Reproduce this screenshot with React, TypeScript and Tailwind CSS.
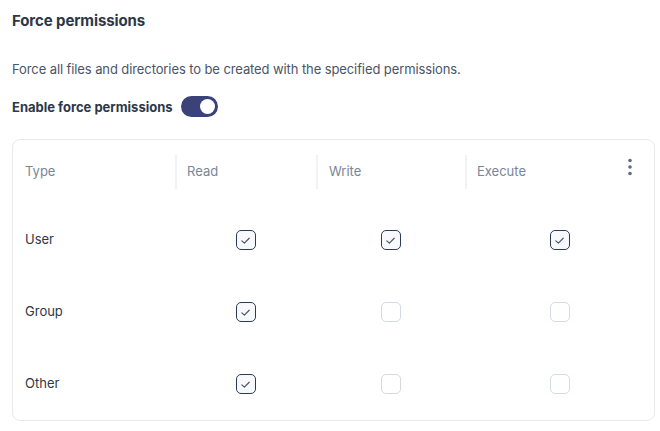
import React, { useState } from 'react';

type Perm = { type: string; read: boolean; write: boolean; execute: boolean };

const initialPerms: Perm[] = [
  { type: 'User', read: true, write: true, execute: true },
  { type: 'Group', read: true, write: false, execute: false },
  { type: 'Other', read: true, write: false, execute: false },
];

const Checkbox: React.FC<{ checked: boolean; onChange: () => void }> = ({ checked, onChange }) => (
  <button
    onClick={onChange}
    className={
      checked
        ? 'w-[20px] h-[20px] rounded-[5px] border-[1.5px] border-[#2f3a55] bg-[#f7f9fc] flex items-center justify-center'
        : 'w-[20px] h-[20px] rounded-[5px] border-[1.5px] border-[#d5dae3] bg-white'
    }
  >
    {checked && (
      <svg width="13" height="13" viewBox="0 0 12 12" fill="none">
        <path d="M2.6 6.3 L5 8.4 L9.4 3.9" stroke="#4a5468" strokeWidth="1.1" strokeLinecap="round" strokeLinejoin="round" />
      </svg>
    )}
  </button>
);

export default function App() {
  const [enabled, setEnabled] = useState(true);
  const [perms, setPerms] = useState<Perm[]>(initialPerms);

  const toggle = (i: number, key: 'read' | 'write' | 'execute') => {
    setPerms(prev => prev.map((p, idx) => (idx === i ? { ...p, [key]: !p[key] } : p)));
  };

  return (
    <div className="w-[660px] h-[431px] bg-white pl-3 pr-[5px] pt-[11px] font-['Inter',sans-serif] text-[#2d3748]">
      <h2 className="text-[15px] font-bold leading-[20px] tracking-[-0.1px]">Force permissions</h2>

      <p className="mt-[29px] text-[13px] leading-[18px] text-[#4a5568] tracking-[-0.1px]">
        Force all files and directories to be created with the specified permissions.
      </p>

      <div className="mt-[18px] flex items-center gap-2">
        <span className="text-[13px] font-bold leading-[18px]">Enable force permissions</span>
        <button
          onClick={() => setEnabled(!enabled)}
          className={`w-[37px] h-[21px] rounded-full p-[3px] flex items-center ${enabled ? 'bg-[#3b4279] justify-end' : 'bg-gray-300 justify-start'}`}
        >
          <span className="w-[15px] h-[15px] rounded-full bg-white block" />
        </button>
      </div>

      {/* Permissions table */}
      <div className="mt-[22px] border border-[#e8eaee] rounded-lg">
        <div className="grid grid-cols-[162px_141px_149px_1fr] h-[64px] items-center text-[13px] text-[#7a8597]">
          <div className="pl-3">Type</div>
          <div className="border-l-2 border-[#f1f2f5] h-[34px] flex items-center pl-[10px]">Read</div>
          <div className="border-l-2 border-[#f1f2f5] h-[34px] flex items-center pl-[11px]">Write</div>
          <div className="border-l-2 border-[#f1f2f5] h-[34px] flex items-center justify-between pl-[10px] pr-[22px]">
            <span>Execute</span>
            <svg width="4" height="18" viewBox="0 0 4 18" className="-mt-[10px]">
              <circle cx="2" cy="2.5" r="1.8" fill="#5f6b80" />
              <circle cx="2" cy="9" r="1.8" fill="#5f6b80" />
              <circle cx="2" cy="15.5" r="1.8" fill="#5f6b80" />
            </svg>
          </div>
        </div>

        {perms.map((p, i) => (
          <div key={p.type} className="grid grid-cols-[162px_141px_149px_1fr] h-[72px] items-center text-[13px] text-[#2d3748]">
            <div className="pl-3">{p.type}</div>
            <div className="flex justify-center">
              <Checkbox checked={p.read} onChange={() => toggle(i, 'read')} />
            </div>
            <div className="flex justify-center">
              <Checkbox checked={p.write} onChange={() => toggle(i, 'write')} />
            </div>
            <div className="flex justify-center">
              <Checkbox checked={p.execute} onChange={() => toggle(i, 'execute')} />
            </div>
          </div>
        ))}
      </div>
    </div>
  );
}
